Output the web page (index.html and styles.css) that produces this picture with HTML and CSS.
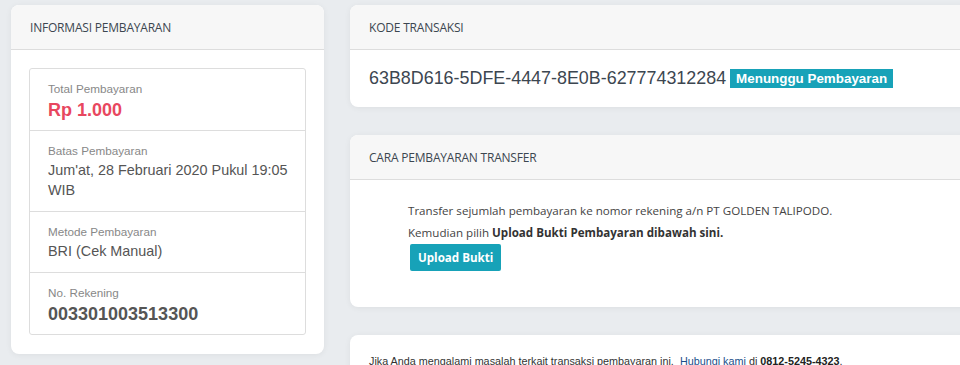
FILE: index.html
```html
<!DOCTYPE html>
<html lang="id">
<head>
  <meta charset="UTF-8" />
  <title>Pembayaran</title>
  <link rel="stylesheet" href="styles.css">
</head>
<body>
  <div class="page">
    <aside class="col-left">
      <div class="card">
        <div class="card-header">Informasi Pembayaran</div>
        <div class="card-body">
          <ul class="info-list">
            <li class="info-item">
              <div class="info-label">Total Pembayaran</div>
              <div class="info-total">Rp 1.000</div>
            </li>
            <li class="info-item">
              <div class="info-label">Batas Pembayaran</div>
              <div class="info-value">Jum'at, 28 Februari 2020 Pukul 19:05 WIB</div>
            </li>
            <li class="info-item">
              <div class="info-label">Metode Pembayaran</div>
              <div class="info-value">BRI (Cek Manual)</div>
            </li>
            <li class="info-item">
              <div class="info-label">No. Rekening</div>
              <div class="info-account">003301003513300</div>
            </li>
          </ul>
        </div>
      </div>
    </aside>

    <main class="col-right">
      <div class="card">
        <div class="card-header">Kode Transaksi</div>
        <div class="card-body code-body">
          <span class="trx-code">63B8D616-5DFE-4447-8E0B-627774312284</span>
          <span class="badge">Menunggu Pembayaran</span>
        </div>
      </div>

      <div class="card">
        <div class="card-header">Cara Pembayaran Transfer</div>
        <div class="card-body steps">
          <p>Transfer sejumlah pembayaran ke nomor rekening a/n PT GOLDEN TALIPODO.</p>
          <p>Kemudian pilih <b>Upload Bukti Pembayaran dibawah sini.</b></p>
          <button class="btn-upload">Upload Bukti</button>
        </div>
      </div>

      <div class="card">
        <div class="card-body help">
          Jika Anda mengalami masalah terkait transaksi pembayaran ini.&nbsp;
          <a href="#">Hubungi kami</a> di <b>0812-5245-4323</b>.
        </div>
      </div>
    </main>
  </div>
</body>
</html>
```

FILE: styles.css
```css
* {
  margin: 0;
  padding: 0;
  box-sizing: border-box;
}
body {
  background: #e9ecef;
  font-family: 'Liberation Sans', Arial, sans-serif;
  color: #555;
  overflow: hidden;
}
.page {
  display: grid;
  grid-template-columns: 313px 660px;
  gap: 26px;
  padding: 5px 0 0 11px;
  width: 1020px;
}
.col-right {
  display: flex;
  flex-direction: column;
  gap: 28px;
}
.card {
  background: #fff;
  border-radius: 8px;
  box-shadow: 0 1px 6px rgba(0, 0, 0, 0.06);
  overflow: hidden;
}
.card-header {
  background: #f7f7f7;
  border-bottom: 1px solid #ddd;
  height: 45px;
  padding: 0 19px;
  display: flex;
  align-items: center;
  font-family: 'Open Sans', sans-serif;
  font-size: 12px;
  letter-spacing: -0.2px;
  text-transform: uppercase;
  color: #3c4650;
}
.card-body {
  padding: 18px 18px 19px;
}
.info-list {
  list-style: none;
  border: 1px solid #ddd;
  border-radius: 3px;
}
.info-item {
  padding: 12px 12px 11px 18px;
  border-bottom: 1px solid #ddd;
}
.info-item:last-child {
  border-bottom: 0;
}
.info-label {
  font-size: 11.7px;
  color: #888;
  line-height: 16px;
}
.info-total {
  margin-top: 4px;
  font-size: 18px;
  font-weight: bold;
  color: #e8475f;
  line-height: 18px;
}
.info-value {
  font-size: 14.4px;
  line-height: 20px;
  color: #555;
  margin-top: 1px;
}
.info-account {
  margin-top: 4px;
  font-size: 18px;
  font-weight: bold;
  color: #555;
  line-height: 18px;
}
.code-body {
  height: 57px;
  padding: 0 19px;
  display: flex;
  align-items: center;
  gap: 4px;
}
.trx-code {
  font-size: 17.9px;
  color: #3c4650;
}
.badge {
  background: #17a2b8;
  color: #fff;
  font-size: 13.4px;
  font-weight: bold;
  padding: 2px 6px;
  line-height: 15px;
}
.steps {
  height: 127px;
  padding: 20px 19px 0 58px;
  font-family: 'Open Sans', sans-serif;
  font-size: 11.6px;
  color: #444;
}
.steps p {
  line-height: 22px;
}
.steps b {
  font-weight: 700;
  color: #333;
}
.btn-upload {
  margin-left: 2px;
  background: #17a2b8;
  color: #fff;
  border: 0;
  border-radius: 2px;
  font-family: 'Open Sans', sans-serif;
  font-weight: 700;
  font-size: 11.6px;
  padding: 0 8px;
  height: 27px;
}
.help {
  padding: 20px 15px 20px 19px;
  font-size: 10.8px;
  color: #333;
}
.help a {
  color: #1a4e8a;
  text-decoration: none;
}
.help b {
  color: #222;
}
```
